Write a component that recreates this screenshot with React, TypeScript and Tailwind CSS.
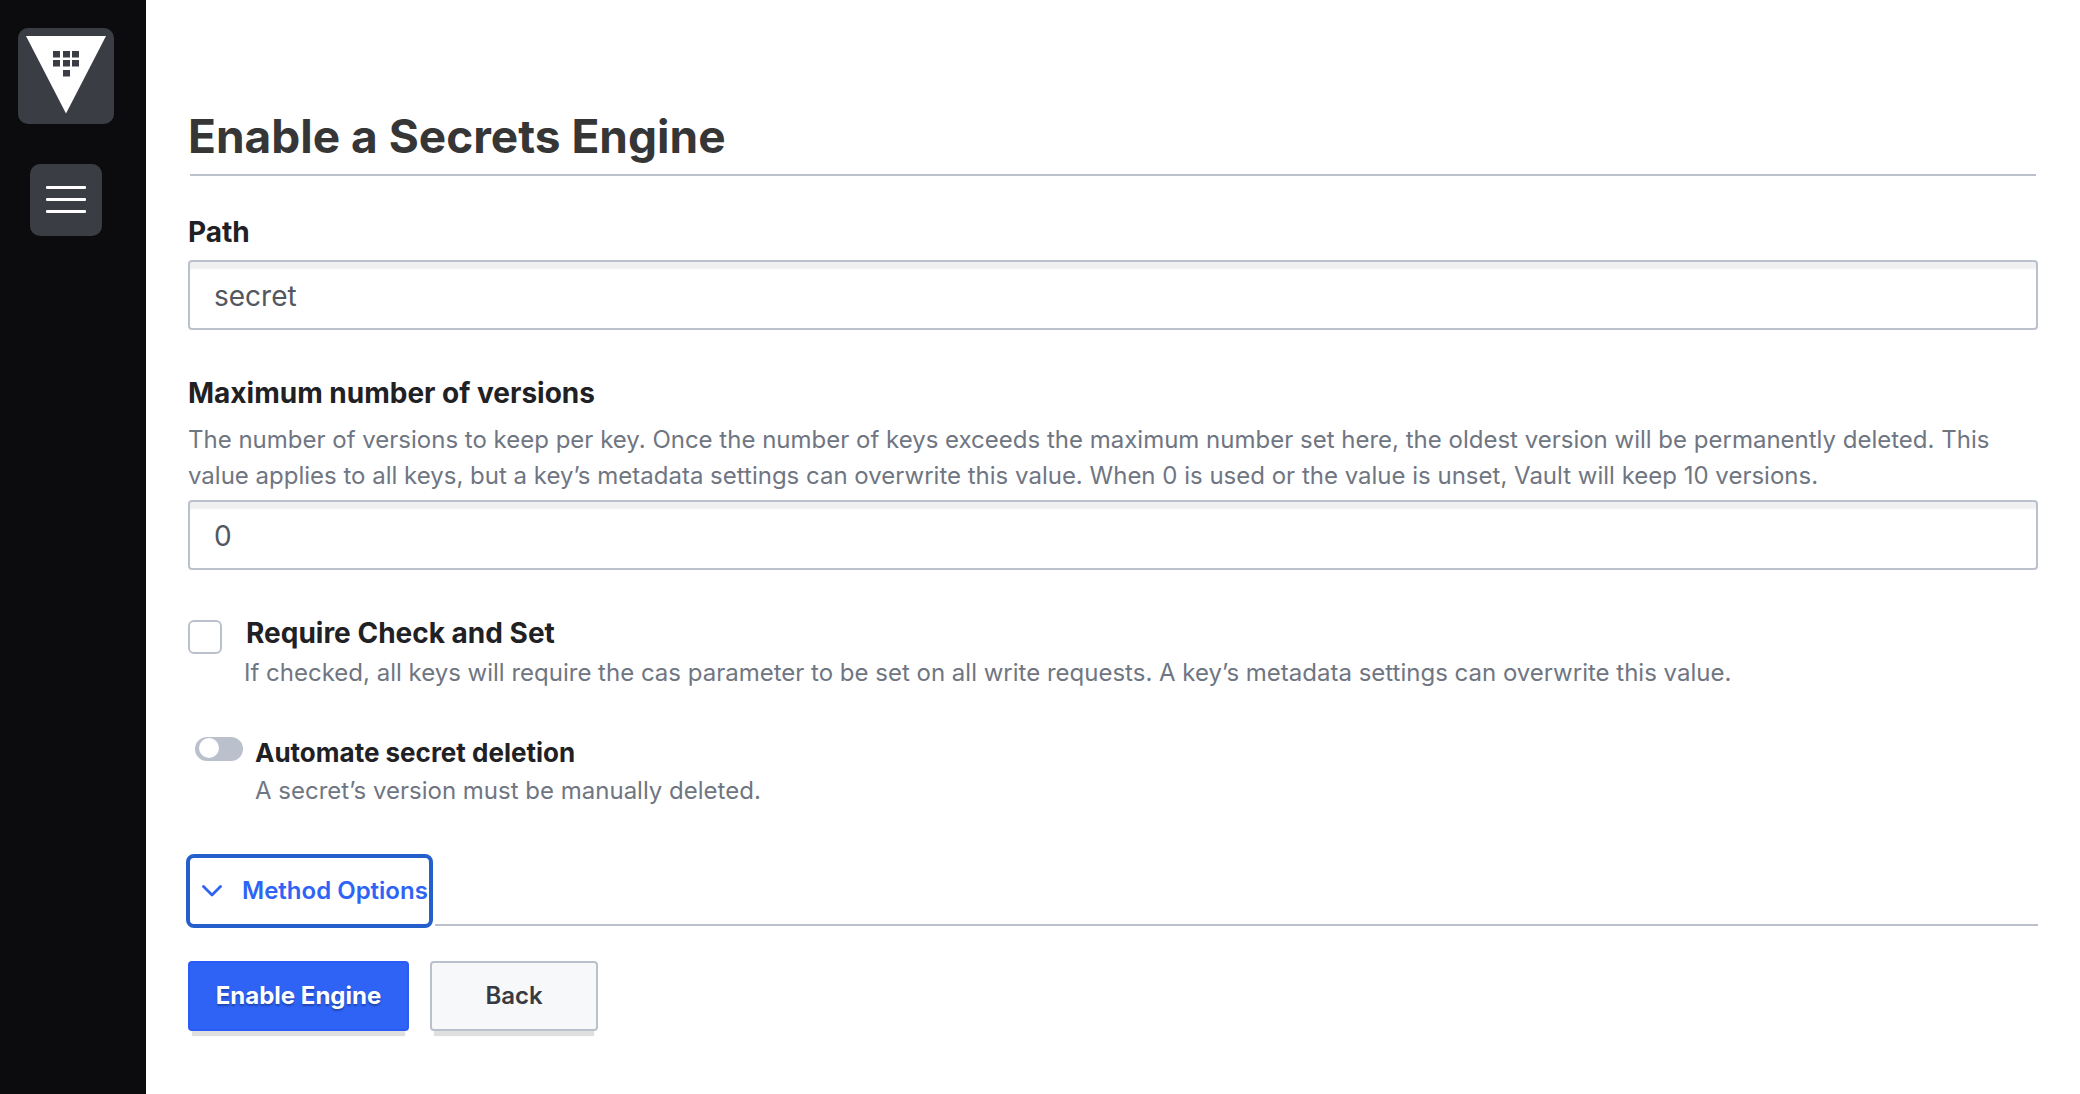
import { useState } from "react";

const inputClass =
  "block h-[70px] w-full rounded-[4px] border-2 border-[#bac1cc] bg-white px-6 pt-[2px] text-[28px] text-[#525761] shadow-[inset_0_8px_2px_-1px_#f0f0f0] outline-none";
const labelClass = "text-[28px] leading-10 font-bold text-[#1f2124]";
const helpClass = "text-[24px] leading-9 text-[#6f7682]";

function VaultLogo() {
  const dots = [
    [53, 51], [63, 51], [72, 51],
    [53, 60], [63, 60], [72, 60],
    [63, 70],
  ];
  return (
    <svg viewBox="18 28 96 96" className="size-24" aria-hidden="true">
      <path d="M26 36H106L66 113.500Z" fill="#fff" />
      {dots.map(([x, y]) => (
        <rect key={`${x}-${y}`} x={x} y={y} width="7" height="6.500" fill="#3b3d45" />
      ))}
    </svg>
  );
}

function Sidebar() {
  return (
    <nav className="flex w-[146px] shrink-0 flex-col items-center gap-10 bg-[#0c0c0e] pt-7 pr-[14px]">
      <a href="#home" aria-label="Vault home" className="rounded-[10px] bg-[#3b3d45]">
        <VaultLogo />
      </a>
      <button
        type="button"
        aria-label="Menu"
        className="flex size-[72px] flex-col items-center justify-center gap-[9px] rounded-[10px] bg-[#3b3d45] pb-[2px]"
      >
        <span className="h-[3px] w-10 rounded-[1px] bg-white" />
        <span className="h-[3px] w-10 rounded-[1px] bg-white" />
        <span className="h-[3px] w-10 rounded-[1px] bg-white" />
      </button>
    </nav>
  );
}

export default function App() {
  const [path, setPath] = useState("secret");
  const [max, setMax] = useState("0");
  const [cas, setCas] = useState(false);
  const [auto, setAuto] = useState(false);

  return (
    <div className="flex min-h-screen bg-white font-['Inter',sans-serif]">
      <Sidebar />
      <main className="min-w-0 flex-1 pt-[108px] pr-[42px] pl-[42px]">
        <h1 className="text-[46px] leading-[56px] font-bold text-[#363636]">Enable a Secrets Engine</h1>
        <hr className="mx-[2px] mt-[10px] border-t-2 border-[#bac1cc]" />

        <form onSubmit={(e) => e.preventDefault()}>
          <div className="mt-9">
            <label htmlFor="path" className={`block ${labelClass}`}>Path</label>
            <input id="path" value={path} onChange={(e) => setPath(e.target.value)} className={`mt-2 ${inputClass}`} />
          </div>

          <div className="mt-[43px]">
            <label htmlFor="max" className={`block ${labelClass}`}>Maximum number of versions</label>
            <p id="max-help" className={`mt-[9px] ${helpClass}`}>
              The number of versions to keep per key. Once the number of keys exceeds the maximum number set here, the
              oldest version will be permanently deleted. This value applies to all keys, but a key’s metadata settings
              can overwrite this value. When 0 is used or the value is unset, Vault will keep 10 versions.
            </p>
            <input
              id="max"
              aria-describedby="max-help"
              value={max}
              onChange={(e) => setMax(e.target.value)}
              className={`mt-[6px] ${inputClass}`}
            />
          </div>

          <div className="mt-[43px] flex items-start gap-[22px]">
            <input
              id="cas"
              type="checkbox"
              checked={cas}
              onChange={(e) => setCas(e.target.checked)}
              className="mt-[7px] size-[34px] shrink-0 appearance-none rounded-[6px] border-2 border-[#bac1cc] bg-white checked:bg-[#2e63f6]"
            />
            <div>
              <label htmlFor="cas" className={`block pl-[2px] ${labelClass}`}>Require Check and Set</label>
              <p className={`mt-[2px] ${helpClass}`}>
                If checked, all keys will require the cas parameter to be set on all write requests. A key’s metadata
                settings can overwrite this value.
              </p>
            </div>
          </div>

          <div className="mt-10 flex items-start gap-3 pl-[7px]">
            <input
              id="auto"
              type="checkbox"
              role="switch"
              checked={auto}
              onChange={(e) => setAuto(e.target.checked)}
              className="mt-[6px] h-6 w-12 shrink-0 appearance-none rounded-full bg-[#bac1cc] px-1 py-[1px] before:block before:size-5 before:rounded-full before:bg-white checked:bg-[#2e63f6] checked:before:ml-auto"
            />
            <div>
              <label htmlFor="auto" className="block pt-[2px] text-[26px] leading-10 font-bold text-[#1f2124]">
                Automate secret deletion
              </label>
              <p className={helpClass}>A secret’s version must be manually deleted.</p>
            </div>
          </div>

          <div className="mt-[45px] -ml-[2px] flex items-end">
            <button
              type="button"
              className="flex h-[74px] w-[247px] shrink-0 items-center gap-5 rounded-[8px] border-4 border-[#255fcc] pl-3 text-[24px] font-semibold whitespace-nowrap text-[#2e63f6]"
            >
              <svg viewBox="0 0 20 12" className="h-3 w-5 shrink-0" fill="none" stroke="currentColor" strokeWidth="2.800" strokeLinecap="round" strokeLinejoin="round" aria-hidden="true">
                <path d="M1.500 1.500L10 10L18.500 1.500" />
              </svg>
              Method Options
            </button>
            <span className="mb-[2px] ml-[2px] h-[2px] flex-1 bg-[#bac1cc]" />
          </div>

          <div className="mt-[33px] flex gap-[21px] pb-[61px]">
            <button
              type="submit"
              className="h-[70px] w-[221px] rounded-[4px] border-2 border-[#2a5cf5] bg-[#2e63f6] text-[24px] font-bold text-white shadow-[0_9px_1px_-4px_#dfdfdf] text-shadow-[0_2px_2px_rgb(0_0_0/0.3)]"
            >
              Enable Engine
            </button>
            <button
              type="button"
              className="h-[70px] w-[168px] rounded-[4px] border-2 border-[#bac1cc] bg-[#f7f8fa] text-[24px] font-semibold text-[#373a42] shadow-[0_9px_1px_-4px_#dfdfdf]"
            >
              Back
            </button>
          </div>
        </form>
      </main>
    </div>
  );
}
